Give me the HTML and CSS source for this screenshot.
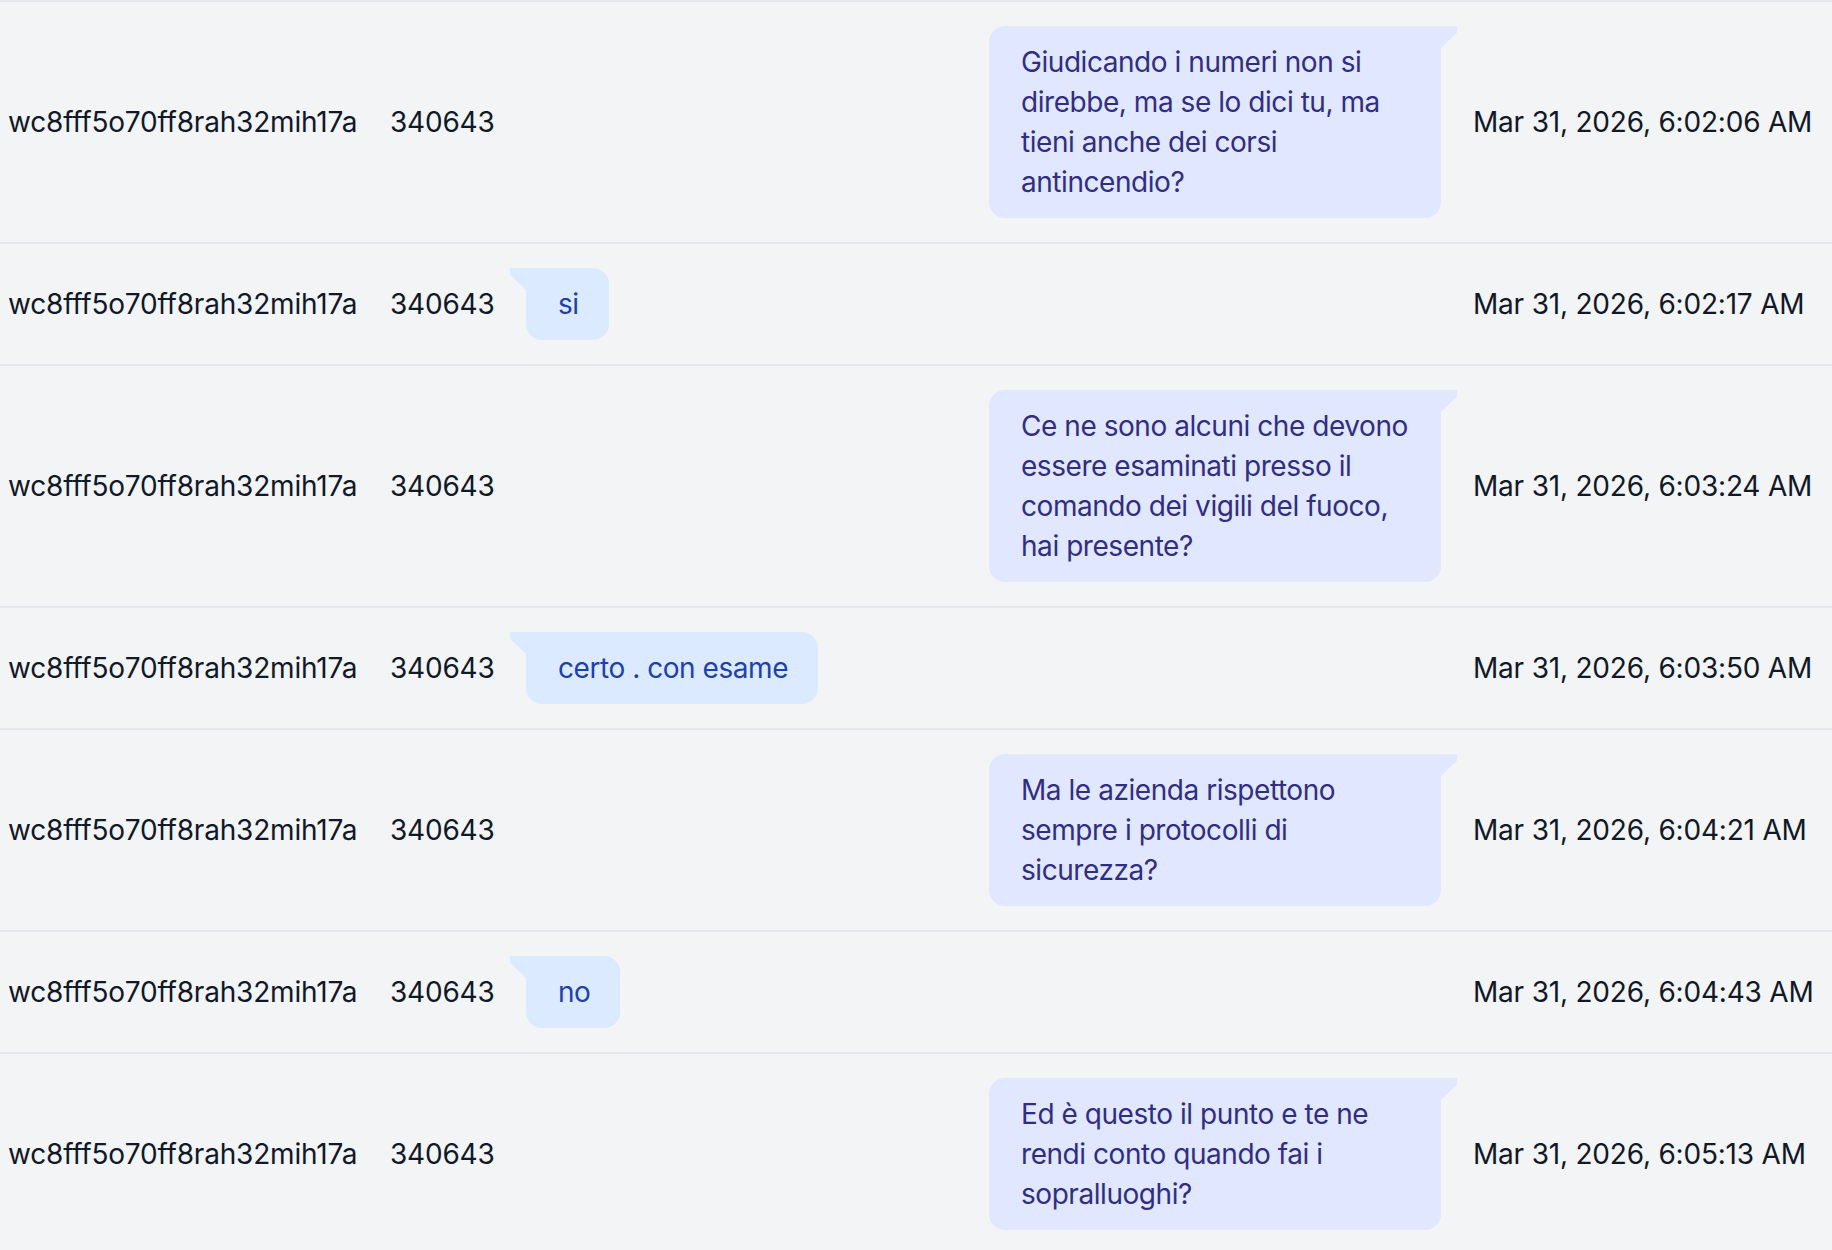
FILE: index.html
```html
<!DOCTYPE html>
<html lang="it">
<head>
    <meta charset="UTF-8">
    <meta name="viewport" content="width=device-width, initial-scale=1.0">
    <title>Messaggi</title>
    <link rel="stylesheet" href="styles.css">
</head>
<body>
    <div class="log">
        <div class="row">
            <div class="cell">wc8fff5o70ff8rah32mih17a</div>
            <div class="cell">340643</div>
            <div class="cell msg"><div class="bubble out">Giudicando i numeri non si direbbe, ma se lo dici tu, ma tieni anche dei corsi antincendio?</div></div>
            <div class="cell">Mar 31, 2026, 6:02:06 AM</div>
        </div>
        <div class="row">
            <div class="cell">wc8fff5o70ff8rah32mih17a</div>
            <div class="cell">340643</div>
            <div class="cell msg"><div class="bubble in">si</div></div>
            <div class="cell">Mar 31, 2026, 6:02:17 AM</div>
        </div>
        <div class="row">
            <div class="cell">wc8fff5o70ff8rah32mih17a</div>
            <div class="cell">340643</div>
            <div class="cell msg"><div class="bubble out">Ce ne sono alcuni che devono essere esaminati presso il comando dei vigili del fuoco, hai presente?</div></div>
            <div class="cell">Mar 31, 2026, 6:03:24 AM</div>
        </div>
        <div class="row">
            <div class="cell">wc8fff5o70ff8rah32mih17a</div>
            <div class="cell">340643</div>
            <div class="cell msg"><div class="bubble in">certo . con esame</div></div>
            <div class="cell">Mar 31, 2026, 6:03:50 AM</div>
        </div>
        <div class="row">
            <div class="cell">wc8fff5o70ff8rah32mih17a</div>
            <div class="cell">340643</div>
            <div class="cell msg"><div class="bubble out">Ma le azienda rispettono sempre i protocolli di sicurezza?</div></div>
            <div class="cell">Mar 31, 2026, 6:04:21 AM</div>
        </div>
        <div class="row">
            <div class="cell">wc8fff5o70ff8rah32mih17a</div>
            <div class="cell">340643</div>
            <div class="cell msg"><div class="bubble in">no</div></div>
            <div class="cell">Mar 31, 2026, 6:04:43 AM</div>
        </div>
        <div class="row">
            <div class="cell">wc8fff5o70ff8rah32mih17a</div>
            <div class="cell">340643</div>
            <div class="cell msg"><div class="bubble out">Ed è questo il punto e te ne rendi conto quando fai i sopralluoghi?</div></div>
            <div class="cell">Mar 31, 2026, 6:05:13 AM</div>
        </div>
    </div>
</body>
</html>
```

FILE: styles.css
```css
* {
    margin: 0;
    padding: 0;
    box-sizing: border-box;
}

body {
    background: #f3f4f6;
    color: #111827;
    font-family: Inter, "Noto Sans", sans-serif;
    font-size: 28px;
    line-height: 40px;
    letter-spacing: -0.2px;
}

/* Righe del log */
.row {
    display: grid;
    grid-template-columns: 382px 120px 963px 1fr;
    align-items: center;
    padding: 24px 0;
    border-top: 2px solid #e5e7eb;
}

.cell {
    padding: 0 8px;
    white-space: nowrap;
}

.msg {
    display: flex;
    white-space: normal;
}

/* Fumetti */
.bubble {
    position: relative;
    max-width: 452px;
    padding: 16px 30px 16px 32px;
    border-radius: 16px;
    letter-spacing: -0.45px;
}

.bubble::after {
    content: "";
    position: absolute;
    top: 0;
    width: 16px;
    height: 22px;
    background: inherit;
}

.bubble.in {
    margin-left: 16px;
    background: #dbeafe;
    color: #1e40af;
    border-top-left-radius: 0;
}

.bubble.in::after {
    left: -16px;
    clip-path: polygon(0 0, 100% 0, 100% 100%, 0 30%);
}

.bubble.out {
    margin-left: auto;
    margin-right: 16px;
    width: 452px;
    background: #e0e7ff;
    color: #312e81;
    border-top-right-radius: 0;
}

.bubble.out::after {
    right: -16px;
    clip-path: polygon(0 0, 100% 0, 100% 30%, 0 100%);
}
```
